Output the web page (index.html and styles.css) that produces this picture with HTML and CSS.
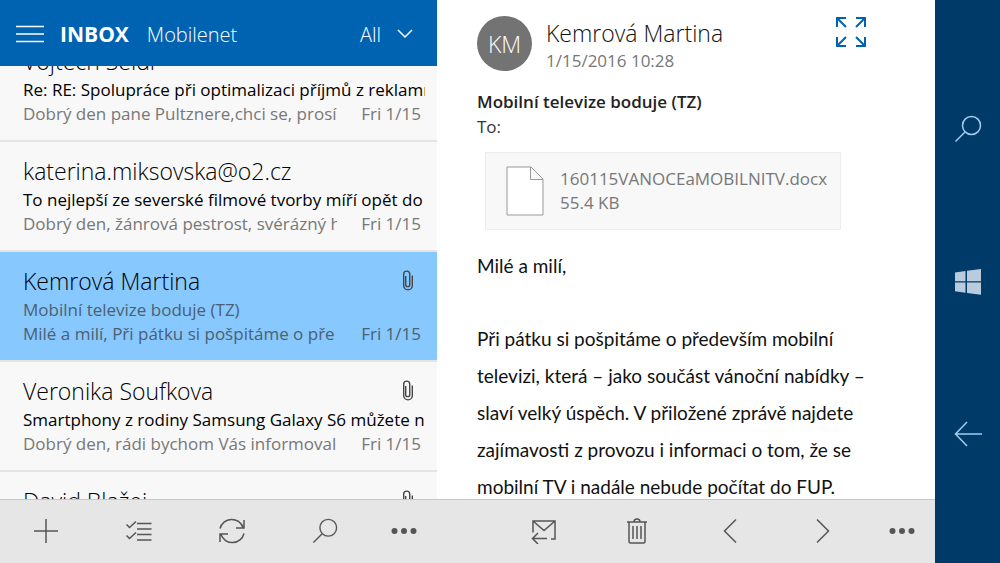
FILE: index.html
```html
<!DOCTYPE html>
<html lang="cs">
<head>
    <meta charset="UTF-8">
    <meta name="viewport" content="width=device-width, initial-scale=1">
    <title>Inbox - Mobilenet</title>
    <link rel="stylesheet" href="styles.css">
</head>
<body>
<svg class="defs" aria-hidden="true">
    <symbol id="clip" viewBox="0 0 12 24">
        <path d="M3.5 6.5v9.5a2.2 2.2 0 0 0 4.4 0V4.5a3.3 3.3 0 0 0-6.6 0V17a4.7 4.7 0 0 0 9.4 0V6"/>
    </symbol>
    <symbol id="search" viewBox="0 0 28 28">
        <circle cx="17.5" cy="10.5" r="9"/>
        <path d="M11 17L1.5 26.5"/>
    </symbol>
    <symbol id="more" viewBox="0 0 26 8">
        <circle cx="3.5" cy="4" r="3"/>
        <circle cx="13" cy="4" r="3"/>
        <circle cx="22.5" cy="4" r="3"/>
    </symbol>
</svg>

<div class="phone">
    <section class="pane">
        <header class="top">
            <button class="menu" aria-label="Menu">
                <svg width="28" height="18" viewBox="0 0 28 18"><path d="M0 1.5h28M0 9h28M0 16.5h28"/></svg>
            </button>
            <h1>INBOX</h1>
            <span class="account">Mobilenet</span>
            <button class="filter">All
                <svg width="16" height="10" viewBox="0 0 16 10"><path d="M1 1l7 7 7-7"/></svg>
            </button>
        </header>

        <div class="list">
            <ul>
                <li><a href="#">
                    <span class="name">Vojtěch Seidl</span>
                    <span class="subject">Re: RE: Spolupráce při optimalizaci příjmů z reklamn</span>
                    <span class="line"><span class="preview">Dobrý den pane Pultznere,chci se, prosí</span><span class="date">Fri 1/15</span></span>
                </a></li>
                <li><a href="#">
                    <span class="name">katerina.miksovska@o2.cz</span>
                    <span class="subject">To nejlepší ze severské filmové tvorby míří opět do</span>
                    <span class="line"><span class="preview">Dobrý den, žánrová pestrost, svérázný h</span><span class="date">Fri 1/15</span></span>
                </a></li>
                <li class="selected"><a href="#">
                    <span class="name">Kemrová Martina <svg class="clip"><use href="#clip"/></svg></span>
                    <span class="subject">Mobilní televize boduje (TZ)</span>
                    <span class="line"><span class="preview">Milé a milí, Při pátku si pošpitáme o pře</span><span class="date">Fri 1/15</span></span>
                </a></li>
                <li><a href="#">
                    <span class="name">Veronika Soufkova <svg class="clip"><use href="#clip"/></svg></span>
                    <span class="subject">Smartphony z rodiny Samsung Galaxy S6 můžete n</span>
                    <span class="line"><span class="preview">Dobrý den, rádi bychom Vás informoval</span><span class="date">Fri 1/15</span></span>
                </a></li>
                <li><a href="#">
                    <span class="name">David Blažej <svg class="clip"><use href="#clip"/></svg></span>
                </a></li>
            </ul>
        </div>

        <div class="bar">
            <button aria-label="New">
                <svg width="24" height="24" viewBox="0 0 24 24"><path d="M12 0v24M0 12h24"/></svg>
            </button>
            <button aria-label="Select">
                <svg width="26" height="22" viewBox="0 0 26 22"><path d="M11 3.5h14.500M11 9h14.500M11 14.500h14.500M11 20h14.500M.5 4.500l3 3L10 1.500M.5 15.500l3 3 6.500-6"/></svg>
            </button>
            <button aria-label="Sync">
                <svg width="26" height="26" viewBox="0 0 26 26"><path d="M1 10.500A12 12 0 0 1 24 9.500M25 2v8h-8M25 15.500A12 12 0 0 1 2 16.500M1 24v-8h8"/></svg>
            </button>
            <button aria-label="Search">
                <svg width="26" height="26"><use href="#search"/></svg>
            </button>
            <button class="more" aria-label="More">
                <svg width="26" height="8"><use href="#more"/></svg>
            </button>
        </div>
    </section>

    <section class="pane reader">
        <article>
            <div class="from">
                <div class="avatar">KM</div>
                <div class="who">
                    <h2>Kemrová Martina</h2>
                    <time>1/15/2016 10:28</time>
                </div>
                <button class="expand" aria-label="Full screen">
                    <svg width="32" height="32" viewBox="0 0 32 32"><path d="M2 11V2h9M2 2l9 9M21 2h9v9M30 2l-9 9M2 21v9h9M2 30l9-9M21 30h9v-9M30 30l-9-9"/></svg>
                </button>
            </div>
            <h3>Mobilní televize boduje (TZ)</h3>
            <div class="to">To:</div>

            <a href="#" class="file">
                <svg width="38" height="50" viewBox="0 0 38 50"><path d="M1 1h24l12 12v36H1zM24.500 1v12.500H37"/></svg>
                <span>160115VANOCEaMOBILNITV.docx<br>55.4 KB</span>
            </a>

            <div class="text">
                <p>Milé a milí,</p>
                <p>Při pátku si pošpitáme o především mobilní televizi, která – jako součást vánoční nabídky – slaví velký úspěch. V přiložené zprávě najdete zajímavosti z provozu i informaci o tom, že se mobilní TV i nadále nebude počítat do FUP.</p>
            </div>
        </article>

        <div class="bar">
            <button aria-label="Reply">
                <svg width="26" height="26" viewBox="0 0 26 26"><path d="M2 14.500V3h22v18h-4M2 3l11 9.500L24 3M1.500 20.500H16M7 15l-5.500 5.500L7 26"/></svg>
            </button>
            <button aria-label="Delete">
                <svg width="22" height="26" viewBox="0 0 22 26"><path d="M1 4h20M3 4v19.500q0 1.500 1.500 1.500h13q1.500 0 1.500-1.500V4M8 4q0-3 3-3t3 3M7 8v13M11 8v13M15 8v13"/></svg>
            </button>
            <button aria-label="Previous">
                <svg width="14" height="26" viewBox="0 0 14 26"><path d="M13 1.500L1.500 13 13 24.500"/></svg>
            </button>
            <button aria-label="Next">
                <svg width="14" height="26" viewBox="0 0 14 26"><path d="M1 1.500L12.500 13 1 24.500"/></svg>
            </button>
            <button class="more" aria-label="More">
                <svg width="26" height="8"><use href="#more"/></svg>
            </button>
        </div>
    </section>

    <nav class="keys">
        <button aria-label="Search">
            <svg width="28" height="28"><use href="#search"/></svg>
        </button>
        <button aria-label="Start">
            <svg class="win" width="28" height="28" viewBox="0 0 28 28"><path d="M1 4.500L11.500 3v10.300H1zM13 2.800L27 1v12.300H13zM1 14.500h10.500v10.300L1 23.300zM13 14.500h14v12.300L13 25z"/></svg>
        </button>
        <button aria-label="Back">
            <svg width="28" height="26" viewBox="0 0 28 26"><path d="M28 13H1.500M13 1L1.500 13 13 25"/></svg>
        </button>
    </nav>
</div>
</body>
</html>
```

FILE: styles.css
```css
* { box-sizing: border-box; }
body { margin: 0; font-family: "Open Sans", "Noto Sans", sans-serif; font-size: 17px; color: #111; }
button { padding: 0; border: 0; background: none; color: inherit; font: inherit; cursor: pointer; }
a { color: inherit; text-decoration: none; }
h1, h2, h3, p, ul { margin: 0; padding: 0; font-weight: normal; }
svg { display: block; flex: none; fill: none; stroke: currentColor; stroke-width: 1.5; }
.defs { position: absolute; width: 0; height: 0; }

.phone { display: grid; grid-template-columns: 437fr 498fr 65px; height: 100vh; overflow: hidden; }
.pane { display: flex; flex-direction: column; min-width: 0; min-height: 0; }

/* header */
.top { display: flex; flex: none; align-items: center; height: 66px; padding: 2px 24px 0 16px; background: #0063b1; color: #fff; }
.top h1 { margin-left: 16px; font-size: 21px; font-weight: 700; }
.account { margin-left: 18px; font-size: 20px; font-weight: 300; }
.filter { display: flex; align-items: center; gap: 16px; margin-left: auto; font-size: 20px; font-weight: 300; }

/* message list */
.list { flex: 1; min-height: 0; overflow: hidden; background: #f8f8f8; }
.list ul { margin-top: -34px; list-style: none; }
.list li { height: 110px; border-bottom: 2px solid #e4e4e4; }
.list a { display: block; padding: 12px 12px 0 23px; }
.name { display: flex; align-items: center; justify-content: space-between; font-size: 23px; font-weight: 300; line-height: 34px; color: #000; }
.subject { display: block; overflow: hidden; line-height: 24px; white-space: nowrap; color: #000; }
.line { display: flex; justify-content: space-between; gap: 24px; padding-right: 4px; line-height: 24px; color: #777; }
.preview { flex: 1; min-width: 0; overflow: hidden; white-space: nowrap; }
.clip { width: 12px; height: 22px; margin-right: 11px; color: #444; }
.selected { background: #87c8ff; }
.selected .subject, .selected .line { color: #4d5f70; }

/* toolbars */
.bar { display: flex; flex: none; justify-content: flex-end; height: 64px; padding-bottom: 1px; border-top: 1px solid #c8c8c8; background: #e6e6e6; color: #555; }
.bar button { display: flex; align-items: center; justify-content: center; width: 93px; }
.bar .more { width: 66px; }
.more svg { fill: currentColor; stroke: none; }

/* opened message */
.reader { background: #fff; }
article { flex: 1; min-height: 0; overflow: hidden; padding: 16px 68px 0 40px; }
.from { display: flex; }
.avatar { flex: none; width: 55px; height: 55px; border-radius: 50%; background: #737373; color: #fff; font-size: 23px; font-weight: 300; line-height: 56px; text-align: center; }
.who { flex: 1; padding-left: 14px; }
.who h2 { font-size: 23px; font-weight: 300; line-height: 34px; }
.who time { display: block; line-height: 22px; color: #777; }
.expand { height: 32px; color: #0063b1; }
.expand svg { stroke-width: 2; }
article h3 { margin-top: 17px; font-size: 17px; font-weight: 600; line-height: 26px; color: #222; }
.to { line-height: 24px; color: #333; }
.file { display: flex; align-items: center; gap: 16px; width: 356px; height: 78px; margin: 13px 0 0 8px; padding: 0 20px; border: 1px solid #eee; background: #f8f8f8; line-height: 24px; color: #777; }
.file path { fill: #fff; stroke: #999; stroke-width: 1; }
.text { margin-top: 17px; font-family: Lato, sans-serif; font-size: 19px; line-height: 37px; color: #111; }
.text p + p { margin-top: 36px; }

/* phone keys */
.keys { display: flex; flex-direction: column; align-items: center; justify-content: space-evenly; background: #003a68; color: #a5cdf0; }
.keys button { display: flex; align-items: center; justify-content: center; width: 100%; height: 48px; }
.win { fill: #b9cbdc; stroke: none; }
```
